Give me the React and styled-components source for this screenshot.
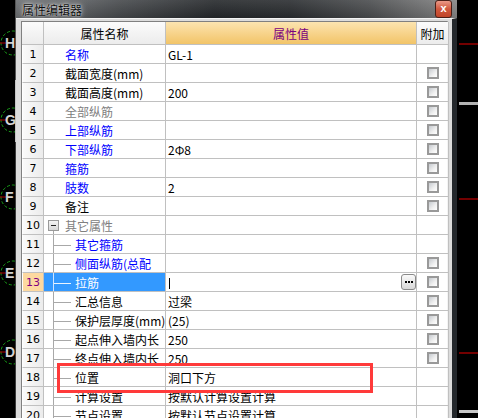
import React from 'react';
import styled, { createGlobalStyle, css } from 'styled-components';

const GlobalStyle = createGlobalStyle`
  html, body {
    margin: 0;
    padding: 0;
    background: #000;
  }
  body {
    font-family: "Noto Sans CJK SC", "Liberation Sans", sans-serif;
    font-size: 12px;
  }
`;

const rows = [
  { no: 1, name: '名称', color: 'blue', value: 'GL-1' },
  { no: 2, name: '截面宽度(mm)', check: true },
  { no: 3, name: '截面高度(mm)', value: '200', check: true },
  { no: 4, name: '全部纵筋', color: 'gray', check: true },
  { no: 5, name: '上部纵筋', color: 'blue', check: true },
  { no: 6, name: '下部纵筋', color: 'blue', value: '2Φ8', check: true },
  { no: 7, name: '箍筋', color: 'blue', check: true },
  { no: 8, name: '肢数', color: 'blue', value: '2', check: true },
  { no: 9, name: '备注', check: true },
  { no: 10, name: '其它属性', color: 'gray', tree: 'parent' },
  { no: 11, name: '其它箍筋', color: 'blue', tree: 'child' },
  { no: 12, name: '侧面纵筋(总配', color: 'blue', tree: 'child', check: true },
  { no: 13, name: '拉筋', tree: 'child', check: true, selected: true },
  { no: 14, name: '汇总信息', tree: 'child', value: '过梁', check: true },
  { no: 15, name: '保护层厚度(mm)', tree: 'child', value: '(25)', check: true },
  { no: 16, name: '起点伸入墙内长', tree: 'child', value: '250', check: true },
  { no: 17, name: '终点伸入墙内长', tree: 'child', value: '250', check: true },
  { no: 18, name: '位置', tree: 'child', value: '洞口下方' },
  { no: 19, name: '计算设置', tree: 'child', value: '按默认计算设置计算' },
  { no: 20, name: '节点设置', tree: 'child', value: '按默认节点设置计算' },
];

const nameColors = { blue: '#0000ff', gray: '#808080' };

const axes = [
  { label: 'H', y: 43 },
  { label: 'G', y: 120 },
  { label: 'F', y: 197 },
  { label: 'E', y: 273 },
  { label: 'D', y: 352 },
];

function App() {
  return (
    <Screen>
      <GlobalStyle />
      <Canvas>
        <svg width="15" height="418">
          {axes.map((a) => (
            <g key={a.label}>
              <circle cx="13" cy={a.y} r="12" fill="none" stroke="#18a018" strokeWidth="1" strokeDasharray="3 2" />
              <line x1="0" y1={a.y} x2="6" y2={a.y} stroke="#b00000" strokeWidth="1" />
              <text x="5" y={a.y + 5} fontSize="14" fontWeight="bold" fill="#d4d4d4" fontFamily="Liberation Sans, sans-serif">
                {a.label}
              </text>
            </g>
          ))}
        </svg>
      </Canvas>
      <ScrollEdge />
      <Window>
        <TitleBar>
          <Title>属性编辑器</Title>
          <CloseButton>x</CloseButton>
        </TitleBar>
        <Body>
          <Grid>
            <HeaderRow>
              <HeadCell />
              <HeadCell>属性名称</HeadCell>
              <HeadCell $accent>属性值</HeadCell>
              <HeadCell>附加</HeadCell>
            </HeaderRow>
            {rows.map((r) => (
              <Row key={r.no}>
                <NumCell $selected={r.selected}>{r.no}</NumCell>
                <NameCell $selected={r.selected} $color={nameColors[r.color]}>
                  {r.tree === 'parent' && (
                    <Gutter $w={21} $kind="parent">
                      <MinusBox />
                    </Gutter>
                  )}
                  {r.tree === 'child' && <Gutter $w={31} $kind="child" $selected={r.selected} />}
                  {!r.tree && <Gutter $w={21} />}
                  <Label>{r.name}</Label>
                </NameCell>
                <ValueCell>
                  {r.selected ? (
                    <>
                      <Caret />
                      <EllipsisButton>
                        <Dot />
                        <Dot />
                        <Dot />
                      </EllipsisButton>
                    </>
                  ) : (
                    <Label>{r.value}</Label>
                  )}
                </ValueCell>
                <ExtraCell>{r.check && <CheckBox />}</ExtraCell>
              </Row>
            ))}
            <Highlight />
          </Grid>
        </Body>
      </Window>
      <Canvas $right>
        <svg width="21" height="418">
          <line x1="2" y1="44" x2="21" y2="44" stroke="#9a0000" strokeWidth="1.5" />
          <rect x="2" y="102" width="19" height="3" fill="#b4b4b4" />
          <line x1="2" y1="199" x2="21" y2="199" stroke="#9a0000" strokeWidth="1.5" />
          <line x1="2" y1="353" x2="21" y2="353" stroke="#9a0000" strokeWidth="1.5" />
          <rect x="2" y="410" width="19" height="3" fill="#c8c8c8" />
        </svg>
      </Canvas>
    </Screen>
  );
}

const Screen = styled.div`
  display: flex;
  width: 478px;
  height: 418px;
  overflow: hidden;
  background: #000;
`;

const Canvas = styled.div`
  width: ${(p) => (p.$right ? 21 : 15)}px;
  flex-shrink: 0;
  background: #000;
  svg {
    display: block;
  }
`;

const ScrollEdge = styled.div`
  width: 1px;
  flex-shrink: 0;
  background: linear-gradient(#555 0, #555 80px, #c4c4c4 80px, #c4c4c4 142px, #3c3c3c 142px);
`;

const Window = styled.div`
  width: 441px;
  flex-shrink: 0;
  display: flex;
  flex-direction: column;
  background: #dcdcdc;
`;

const TitleBar = styled.div`
  height: 24px;
  display: flex;
  align-items: center;
  justify-content: space-between;
  padding: 0 5px 0 6px;
  box-sizing: border-box;
  background:
    linear-gradient(rgba(255, 255, 255, 0.1), rgba(0, 0, 0, 0.1)),
    linear-gradient(90deg, #6a6d70 0%, #5e6164 12%, #45484b 24%, #25282b 45%, #2a2d30 62%, #4a4c4e 80%, #858585 100%);
`;

const Title = styled.span`
  color: #0c0c0c;
  font-size: 12px;
  text-shadow: 0 0 6px rgba(255, 255, 255, 0.75), 0 0 3px rgba(255, 255, 255, 0.6), 0 0 1px rgba(255, 255, 255, 0.6);
`;

const CloseButton = styled.span`
  width: 17px;
  height: 18px;
  box-sizing: border-box;
  border: 1px solid #4a2018;
  border-radius: 3px;
  background: linear-gradient(#eb9a88, #d0583e 50%, #c04428);
  color: #fff;
  font: bold 11px "Liberation Sans", sans-serif;
  display: flex;
  align-items: center;
  justify-content: center;
  line-height: 1;
  padding-bottom: 2px;
`;

const Body = styled.div`
  flex: 1;
  border-top: 1px solid #f4f4f4;
  border-right: 5px solid #24282c;
  padding: 2px 3px 0 5px;
`;

const Grid = styled.div`
  position: relative;
  background: #fff;
  border-top: 1px solid #808080;
  border-left: 1px solid #808080;
  border-right: 2px solid #f4f4f4;
`;

const columns = css`
  display: grid;
  grid-template-columns: 22px 122px 251px 32px;
`;

const HeaderRow = styled.div`
  ${columns}
  height: 23px;
`;

const cellBase = css`
  box-sizing: border-box;
  border-right: 1px solid #c0c0c0;
  border-bottom: 1px solid #c0c0c0;
  overflow: hidden;
  white-space: nowrap;
`;

const HeadCell = styled.div`
  ${cellBase}
  display: flex;
  align-items: center;
  justify-content: center;
  font-size: 12px;
  color: ${(p) => (p.$accent ? '#7a0080' : '#000')};
  background: ${(p) =>
    p.$accent ? 'linear-gradient(#fce4b0, #f2c468)' : 'linear-gradient(#fbfbfb, #ececec)'};
`;

const Row = styled.div`
  ${columns}
  height: 19px;
`;

const NumCell = styled.div`
  ${cellBase}
  display: flex;
  align-items: center;
  justify-content: center;
  font-family: "DejaVu Sans", sans-serif;
  font-size: 11px;
  color: ${(p) => (p.$selected ? '#800080' : '#000')};
  background: ${(p) => (p.$selected ? '#fdd9a0' : 'linear-gradient(90deg, #fafafa, #ececec)')};
  border-left: 1px solid #fff;
`;

const NameCell = styled.div`
  ${cellBase}
  display: flex;
  align-items: stretch;
  color: ${(p) => (p.$selected ? '#fff' : p.$color || '#000')};
  background: ${(p) => (p.$selected ? '#3399ff' : '#fff')};
`;

const Gutter = styled.span`
  position: relative;
  width: ${(p) => p.$w}px;
  flex-shrink: 0;
  box-sizing: border-box;
  ${(p) =>
    p.$kind === 'parent' &&
    css`
      padding: 4px 0 0 4px;
      &::after {
        content: '';
        position: absolute;
        left: 9px;
        top: 15px;
        bottom: -1px;
        width: 1px;
        background: #a8a8a8;
      }
    `}
  ${(p) =>
    p.$kind === 'child' &&
    css`
      &::before {
        content: '';
        position: absolute;
        left: 9px;
        top: -1px;
        bottom: -1px;
        width: 1px;
        background: ${p.$selected ? '#cfe4ff' : '#a8a8a8'};
      }
      &::after {
        content: '';
        position: absolute;
        left: 10px;
        top: 10px;
        width: 17px;
        height: 1px;
        background: ${p.$selected ? '#eaf4ff' : '#a8a8a8'};
      }
    `}
`;

const MinusBox = styled.span`
  display: block;
  position: relative;
  width: 11px;
  height: 11px;
  box-sizing: border-box;
  border: 1px solid #9a9a9a;
  background: linear-gradient(#f4f4f4, #d8d8d8);
  &::after {
    content: '';
    position: absolute;
    left: 2px;
    right: 2px;
    top: 4px;
    height: 1px;
    background: #222;
  }
`;

const Label = styled.span`
  line-height: 18px;
  font-size: 12px;
  padding-top: 1px;
`;

const ValueCell = styled.div`
  ${cellBase}
  display: flex;
  align-items: center;
  justify-content: space-between;
  padding: 0 0 0 2px;
  color: #000;
`;

const Caret = styled.span`
  width: 1px;
  height: 11px;
  margin-left: 1px;
  margin-top: 3px;
  background: #000;
`;

const EllipsisButton = styled.span`
  width: 15px;
  height: 16px;
  box-sizing: border-box;
  border: 1px solid #8a8a8a;
  border-radius: 3px;
  background: linear-gradient(#fafafa, #d8d8d8);
  display: flex;
  align-items: center;
  justify-content: center;
  gap: 1px;
  padding-bottom: 1px;
`;

const Dot = styled.span`
  width: 2px;
  height: 2px;
  background: #000;
`;

const ExtraCell = styled.div`
  ${cellBase}
  display: flex;
  align-items: center;
  justify-content: center;
  padding-left: 1px;
`;

const CheckBox = styled.span`
  width: 12px;
  height: 12px;
  box-sizing: border-box;
  border: 2px solid #999;
  background: linear-gradient(135deg, #c6cacf, #f0f0f0 60%, #ffffff);
`;

const Highlight = styled.div`
  position: absolute;
  left: 35px;
  top: 341px;
  width: 316px;
  height: 30px;
  box-sizing: border-box;
  border: 3px solid #ff3a3a;
  pointer-events: none;
`;

export default App;
